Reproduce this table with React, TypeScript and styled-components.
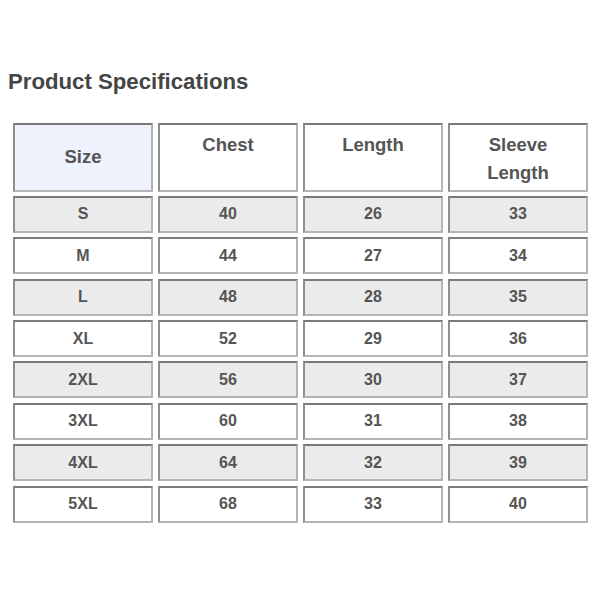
import React from 'react';
import styled, { createGlobalStyle } from 'styled-components';

const GlobalStyle = createGlobalStyle`
    body {
        margin: 0;
        background: #fff;
        font-family: "Liberation Sans", Arial, sans-serif;
    }
`;

const Page = styled.div`
    width: 600px;
    height: 600px;
    padding: 70px 0 0 8px;
    box-sizing: border-box;
`;

const Title = styled.h2`
    margin: 0 0 29px;
    font-size: 22.2px;
    font-weight: bold;
    color: #454545;
    line-height: 24px;
`;

const Grid = styled.div`
    display: grid;
    grid-template-columns: repeat(4, 140px);
    grid-template-rows: 68.5px;
    grid-auto-rows: 37px;
    column-gap: 5px;
    row-gap: 4.4px;
    margin-left: 5px;
`;

const Cell = styled.div<{ $shade?: 'blue' | 'gray' | 'white'; $top?: boolean }>`
    box-sizing: border-box;
    border-style: solid;
    border-width: 2px;
    border-color: #7a7a7a #b4b4b4 #b4b4b4 #8e8e8e;
    background: ${p => (p.$shade === 'blue' ? '#eef2fc' : p.$shade === 'gray' ? '#ebebeb' : '#fff')};
    color: #555;
    font-weight: bold;
    text-align: center;
    display: flex;
    justify-content: center;
    align-items: ${p => (p.$top ? 'flex-start' : 'center')};
`;

const HeadText = styled.span<{ $flush?: boolean }>`
    font-size: 18.5px;
    line-height: 28px;
    padding-top: ${p => (p.$flush ? '0' : '6px')};
`;

const BodyText = styled.span`
    font-size: 16px;
`;

const rows = [
    ['S', 40, 26, 33],
    ['M', 44, 27, 34],
    ['L', 48, 28, 35],
    ['XL', 52, 29, 36],
    ['2XL', 56, 30, 37],
    ['3XL', 60, 31, 38],
    ['4XL', 64, 32, 39],
    ['5XL', 68, 33, 40],
];

const App: React.FC = () => (
    <Page>
        <GlobalStyle />
        <Title>Product Specifications</Title>
        <Grid>
            <Cell $shade="blue">
                <HeadText $flush>Size</HeadText>
            </Cell>
            <Cell $top>
                <HeadText>Chest</HeadText>
            </Cell>
            <Cell $top>
                <HeadText>Length</HeadText>
            </Cell>
            <Cell $top>
                <HeadText>
                    Sleeve
                    <br />
                    Length
                </HeadText>
            </Cell>
            {rows.map((row, i) =>
                row.map((v, j) => (
                    <Cell key={`${i}-${j}`} $shade={i % 2 === 0 ? 'gray' : 'white'}>
                        <BodyText>{v}</BodyText>
                    </Cell>
                ))
            )}
        </Grid>
    </Page>
);

export default App;
